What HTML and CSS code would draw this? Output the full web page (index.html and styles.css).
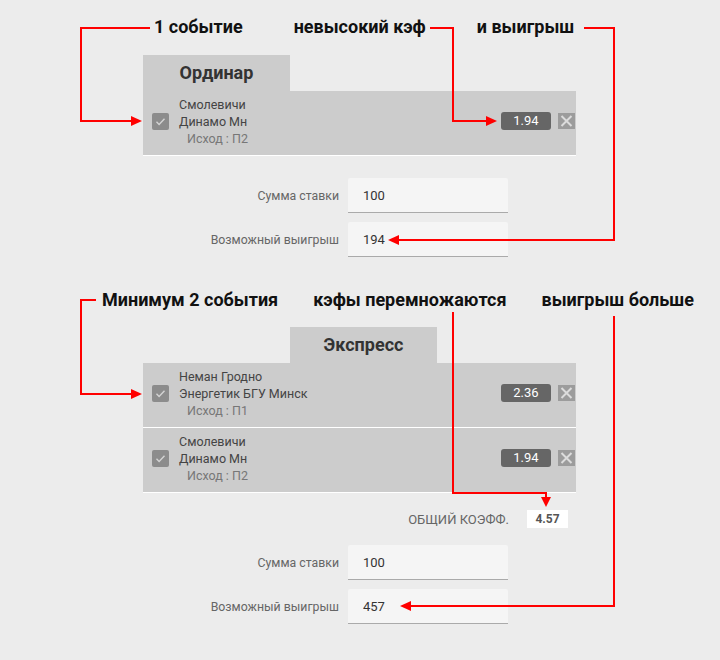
FILE: index.html
```html
<!DOCTYPE html>
<html lang="ru">
<head>
    <meta charset="UTF-8">
    <title>Ординар и экспресс</title>
    <link rel="stylesheet" href="styles.css">
</head>
<body>
    <div class="page">
        <div class="notes notes-one">
            <span>1 событие</span>
            <span>невысокий кэф</span>
            <span>и выигрыш</span>
        </div>
        <div class="slip">
            <div class="tabs">
                <div class="tab">Ординар</div>
            </div>
            <div class="bets">
                <div class="bet">
                    <span class="check"><svg width="17" height="17" viewBox="0 0 17 17"><path d="M4.5 8.8l2.6 2.6 5.4-5.6" fill="none" stroke="#d4d4d4" stroke-width="1.4"/></svg></span>
                    <div class="info">
                        <div>Смолевичи</div>
                        <div>Динамо Мн</div>
                        <div class="outcome">Исход : П2</div>
                    </div>
                    <span class="coef">1.94</span>
                    <span class="remove"><svg width="17" height="16" viewBox="0 0 17 16"><path d="M3.5 3l10 10M13.5 3l-10 10" stroke="#dcdcdc" stroke-width="2"/></svg></span>
                </div>
            </div>
            <form class="stake-form stake-single">
                <label class="row"><span class="label">Сумма ставки</span><input class="field" value="100"></label>
                <label class="row"><span class="label">Возможный выигрыш</span><input class="field" value="194" readonly></label>
            </form>
        </div>

        <div class="notes notes-two">
            <span>Минимум 2 события</span>
            <span>кэфы перемножаются</span>
            <span>выигрыш больше</span>
        </div>
        <div class="slip">
            <div class="tabs">
                <div class="tab tab-empty"></div>
                <div class="tab">Экспресс</div>
            </div>
            <div class="bets">
                <div class="bet">
                    <span class="check"><svg width="17" height="17" viewBox="0 0 17 17"><path d="M4.5 8.8l2.6 2.6 5.4-5.6" fill="none" stroke="#d4d4d4" stroke-width="1.4"/></svg></span>
                    <div class="info">
                        <div>Неман Гродно</div>
                        <div>Энергетик БГУ Минск</div>
                        <div class="outcome">Исход : П1</div>
                    </div>
                    <span class="coef">2.36</span>
                    <span class="remove"><svg width="17" height="16" viewBox="0 0 17 16"><path d="M3.5 3l10 10M13.5 3l-10 10" stroke="#dcdcdc" stroke-width="2"/></svg></span>
                </div>
                <div class="bet">
                    <span class="check"><svg width="17" height="17" viewBox="0 0 17 17"><path d="M4.5 8.8l2.6 2.6 5.4-5.6" fill="none" stroke="#d4d4d4" stroke-width="1.4"/></svg></span>
                    <div class="info">
                        <div>Смолевичи</div>
                        <div>Динамо Мн</div>
                        <div class="outcome">Исход : П2</div>
                    </div>
                    <span class="coef">1.94</span>
                    <span class="remove"><svg width="17" height="16" viewBox="0 0 17 16"><path d="M3.5 3l10 10M13.5 3l-10 10" stroke="#dcdcdc" stroke-width="2"/></svg></span>
                </div>
            </div>
            <div class="total">
                <span class="total-label">Общий коэфф.</span>
                <span class="total-value">4.57</span>
            </div>
            <form class="stake-form stake-express">
                <label class="row"><span class="label">Сумма ставки</span><input class="field" value="100"></label>
                <label class="row"><span class="label">Возможный выигрыш</span><input class="field" value="457" readonly></label>
            </form>
        </div>

        <!-- annotation arrows drawn over the slips -->
        <svg class="arrows" width="720" height="660" viewBox="0 0 720 660">
            <g fill="none" stroke="#f00" stroke-width="2">
                <polyline points="150,28 81,28 81,121 134,121"/>
                <polyline points="430,28 453,28 453,121 489,121"/>
                <polyline points="584,28 614,28 614,240 396,240"/>
                <polyline points="96,300 81,300 81,394 134,394"/>
                <polyline points="453,312 453,493 546,493 546,499"/>
                <polyline points="614,316 614,606 408,606"/>
            </g>
            <g fill="#f00">
                <polygon points="131,116 142,121 131,126"/>
                <polygon points="486,116 497,121 486,126"/>
                <polygon points="399,235 388,240 399,245"/>
                <polygon points="131,389 142,394 131,399"/>
                <polygon points="541,497 551,497 546,507"/>
                <polygon points="411,601 400,606 411,611"/>
            </g>
        </svg>
    </div>
</body>
</html>
```

FILE: styles.css
```css
* { box-sizing: border-box; }
body { margin: 0; background: #ececec; font-family: Roboto, "Liberation Sans", sans-serif; }
.page { position: relative; width: 720px; height: 660px; padding-top: 17px; }

.notes { display: flex; height: 20px; line-height: 20px; font-size: 18px; font-weight: bold; color: #111; }
.notes-one { padding-left: 154px; gap: 51px; }
.notes-two { padding-left: 102px; gap: 35px; margin-top: 33px; }

.slip { margin-left: 143px; width: 433px; }
.tabs { display: flex; height: 36px; margin-top: 18px; }
.notes-two + .slip .tabs { margin-top: 17px; }
.tab { width: 147px; background: #cccccc; text-align: center; line-height: 36px; font-size: 18px; font-weight: bold; color: #333; }
.tab-empty { background: none; }

.bets { background: #cccccc; }
.bet { display: flex; align-items: center; height: 65px; padding: 5px 1px 9px 9px; border-bottom: 1px solid #fff; }
.check { width: 17px; height: 17px; margin-right: 10px; background: #8c8c8c; border-radius: 2px; }
.check svg { display: block; }
.info { font-size: 12.5px; line-height: 17px; color: #444; }
.outcome { padding-left: 8px; color: #777; }
.coef { margin-left: auto; width: 50px; height: 18px; line-height: 18px; background: #666; border-radius: 3px; color: #fff; font-size: 13px; text-align: center; }
.remove { width: 17px; height: 16px; margin-left: 7px; background: #9c9c9c; }
.remove svg { display: block; }

.total { display: flex; justify-content: flex-end; align-items: center; gap: 18px; margin-top: 17px; padding-right: 8px; }
.total-label { font-size: 13px; color: #666; text-transform: uppercase; }
.total-value { width: 41px; height: 18px; line-height: 18px; background: #fff; text-align: center; font-size: 12px; font-weight: bold; color: #555; }

.stake-form { display: flex; flex-direction: column; gap: 9px; }
.stake-single { margin-top: 22px; }
.stake-express { margin-top: 17px; }
.row { display: flex; align-items: center; gap: 9px; }
.label { width: 196px; text-align: right; font-size: 12.3px; color: #666; }
.field { width: 160px; height: 35px; padding: 0 0 0 15px; border: none; border-bottom: 1px solid #aaa; border-radius: 2px 2px 0 0; background: #f5f5f5; font-family: Roboto, sans-serif; font-size: 13px; color: #333; outline: none; }

.arrows { position: absolute; top: 0; left: 0; pointer-events: none; }
```
